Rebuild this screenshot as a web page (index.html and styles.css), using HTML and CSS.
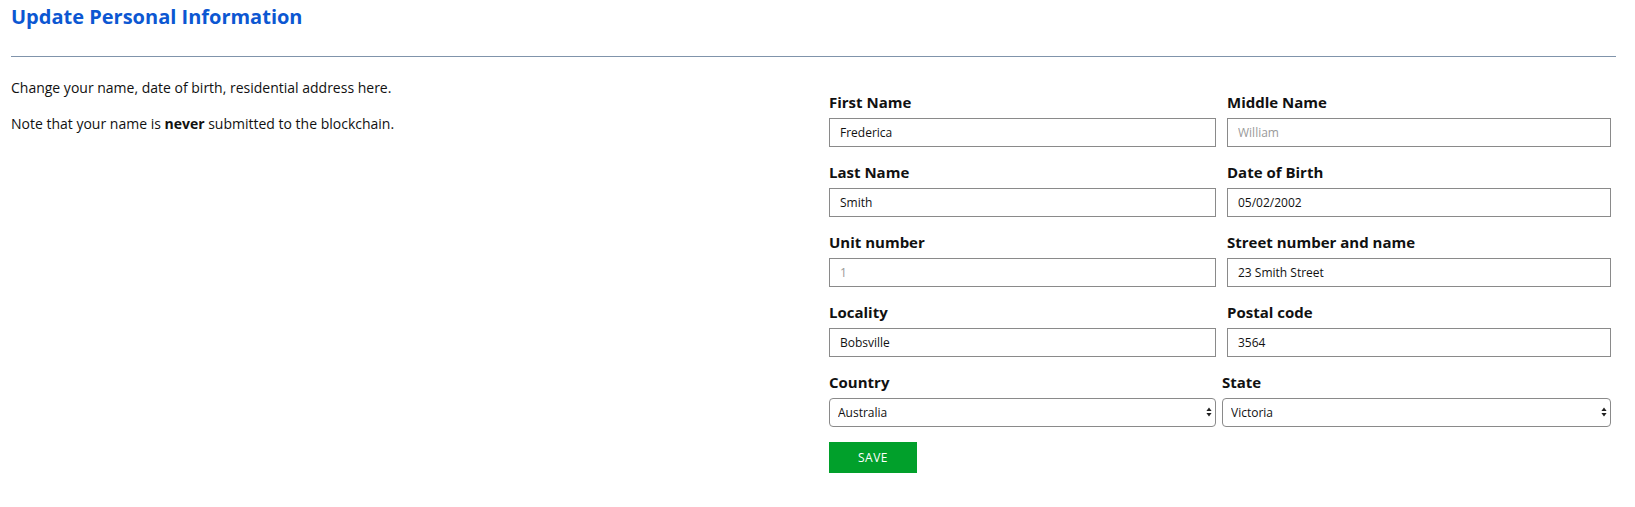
FILE: index.html
```html
<!DOCTYPE html>
<html lang="en">
<head>
    <meta charset="UTF-8">
    <meta name="viewport" content="width=device-width, initial-scale=1.0">
    <title>Update Personal Information</title>
    <link rel="stylesheet" href="styles.css">
</head>
<body>
    <div class="page">
        <h1>Update Personal Information</h1>
        <hr>
        <div class="content">
            <!-- Intro text -->
            <div class="intro">
                <p>Change your name, date of birth, residential address here.</p>
                <p>Note that your name is <strong>never</strong> submitted to the blockchain.</p>
            </div>

            <!-- Form -->
            <form class="details" onsubmit="return false;">
                <div class="row">
                    <div class="field">
                        <label for="firstName">First Name</label>
                        <input type="text" id="firstName" value="Frederica">
                    </div>
                    <div class="field">
                        <label for="middleName">Middle Name</label>
                        <input type="text" id="middleName" placeholder="William">
                    </div>
                </div>
                <div class="row">
                    <div class="field">
                        <label for="lastName">Last Name</label>
                        <input type="text" id="lastName" value="Smith">
                    </div>
                    <div class="field">
                        <label for="dob">Date of Birth</label>
                        <input type="text" id="dob" value="05/02/2002">
                    </div>
                </div>
                <div class="row">
                    <div class="field">
                        <label for="unit">Unit number</label>
                        <input type="text" id="unit" placeholder="1">
                    </div>
                    <div class="field">
                        <label for="street">Street number and name</label>
                        <input type="text" id="street" value="23 Smith Street">
                    </div>
                </div>
                <div class="row">
                    <div class="field">
                        <label for="locality">Locality</label>
                        <input type="text" id="locality" value="Bobsville">
                    </div>
                    <div class="field">
                        <label for="postcode">Postal code</label>
                        <input type="text" id="postcode" value="3564">
                    </div>
                </div>
                <div class="row row-select">
                    <div class="field">
                        <label for="country">Country</label>
                        <div class="select-wrap">
                            <select id="country">
                                <option>Australia</option>
                                <option>New Zealand</option>
                            </select>
                            <svg class="arrows" width="6" height="10" viewBox="0 0 6 10"><path d="M3 0.5L5.6 4H0.4z M3 9.5L5.6 6H0.4z" fill="#222"/></svg>
                        </div>
                    </div>
                    <div class="field">
                        <label for="state">State</label>
                        <div class="select-wrap">
                            <select id="state">
                                <option>Victoria</option>
                                <option>New South Wales</option>
                                <option>Queensland</option>
                            </select>
                            <svg class="arrows" width="6" height="10" viewBox="0 0 6 10"><path d="M3 0.5L5.6 4H0.4z M3 9.5L5.6 6H0.4z" fill="#222"/></svg>
                        </div>
                    </div>
                </div>
                <div class="actions">
                    <button type="submit">SAVE</button>
                </div>
            </form>
        </div>
    </div>
</body>
</html>
```

FILE: styles.css
```css
body {
    margin: 0;
    font-family: "Open Sans", "Noto Sans", sans-serif;
    color: #111;
    background: #fff;
}
.page {
    padding: 5px 19px 20px 11px;
}
h1 {
    margin: 0;
    font-size: 20px;
    line-height: 24px;
    font-weight: 700;
    color: #0c57d2;
}
hr {
    margin: 27px 0 0;
    border: none;
    border-top: 1px solid #8094ab;
}
.content {
    display: grid;
    grid-template-columns: 818px 1fr;
}
.intro {
    padding-top: 21px;
    font-size: 14px;
    line-height: 20px;
}
.intro p {
    margin: 0 0 16px;
}
.details {
    padding: 33px 5px 0 0;
}
.row {
    display: grid;
    grid-template-columns: 387px 1fr;
    column-gap: 11px;
}
.row-select {
    column-gap: 6px;
}
.field label {
    display: block;
    font-size: 15px;
    line-height: 24px;
    font-weight: 700;
    margin-bottom: 4px;
}
.field input, .field select {
    display: block;
    width: 100%;
    box-sizing: border-box;
    height: 29px;
    margin-bottom: 13px;
    border: 1px solid #8a8a8a;
    border-radius: 0;
    padding: 0 10px;
    font-family: inherit;
    font-size: 12px;
    color: #111;
    background: #fff;
}
.field input::placeholder {
    color: #9a9a9a;
}
.select-wrap {
    position: relative;
}
.field select {
    appearance: none;
    -webkit-appearance: none;
    border-radius: 4px;
    padding: 0 20px 0 8px;
}
.arrows {
    position: absolute;
    right: 4px;
    top: 9px;
    pointer-events: none;
}
.actions {
    padding-top: 2px;
}
button {
    width: 88px;
    height: 31px;
    border: none;
    background: #01a02b;
    color: #fff;
    font-family: inherit;
    font-size: 12px;
    letter-spacing: 0.5px;
    cursor: pointer;
}
```
